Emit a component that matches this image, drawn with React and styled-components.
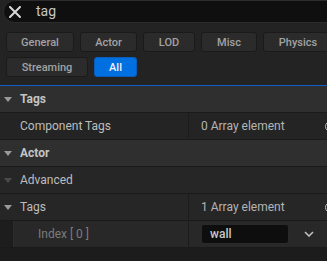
import React from 'react';
import styled, { createGlobalStyle } from 'styled-components';

const Global = createGlobalStyle`
  html, body {
    margin: 0;
    padding: 0;
    background: #1c1c1c;
  }
  body {
    width: 327px;
    height: 261px;
    overflow: hidden;
    font-family: Roboto, "Noto Sans", sans-serif;
  }
`;

const Panel = styled.div`
  width: 327px;
  height: 261px;
  overflow: hidden;
  background: #1c1c1c;
`;

const Top = styled.div`
  background: #232323;
  padding: 0 0 8px 0;
`;

const SearchBox = styled.div`
  width: 340px;
  height: 23px;
  margin-left: 3px;
  border: 1px solid #2c2c2c;
  border-radius: 12px;
  background: #0f0f0f;
  display: flex;
  align-items: center;
  box-sizing: border-box;
  padding-left: 5px;
`;

const SearchText = styled.span`
  color: #c6c6c6;
  font-size: 14px;
  margin-left: 15px;
  margin-top: -1px;
`;

const Filters = styled.div`
  display: flex;
  flex-direction: column;
  gap: 5px;
  padding: 9px 0 0 6px;
`;

const FilterRow = styled.div`
  display: flex;
  gap: 6px;
`;

const FilterButton = styled.div`
  height: 20px;
  flex: none;
  box-sizing: border-box;
  width: ${p => p.w}px;
  display: flex;
  align-items: center;
  justify-content: center;
  font-size: 11px;
  font-weight: 500;
  border-radius: 3px;
  border: 1px solid ${p => (p.active ? '#0a5cb8' : '#1a1a1a')};
  background: ${p => (p.active ? '#0070e0' : '#2b2b2b')};
  color: ${p => (p.active ? '#f0f0f0' : '#a2a2a2')};
`;

const Details = styled.div`
  width: 338px;
  border-top: 1px solid #1060c8;
`;

const Row = styled.div`
  display: flex;
  height: 26px;
  border-bottom: 1px solid #1a1a1a;
  background: ${p => p.bg || '#242424'};
`;

const NameCell = styled.div`
  width: ${p => 188 - (p.indent || 0)}px;
  flex: none;
  display: flex;
  align-items: center;
  box-sizing: border-box;
  padding-left: ${p => p.pad || 20}px;
  font-size: 12px;
  font-weight: ${p => (p.bold ? 700 : 400)};
  color: ${p => p.color || '#bdbdbd'};
`;

const Arrow = styled.span`
  width: 0;
  height: 0;
  border-left: 4px solid transparent;
  border-right: 4px solid transparent;
  border-top: 5px solid ${p => p.color || '#9a9a9a'};
  margin-right: 8px;
  margin-left: -16px;
`;

const ValueCell = styled.div`
  flex: 1;
  display: flex;
  align-items: center;
  border-left: 1px solid #1c1c1c;
  padding: 0 2px 0 12px;
  font-size: 12px;
  color: #b4b4b4;
`;

const Reset = styled.span`
  margin-left: auto;
  width: 9px;
  height: 9px;
  border: 1.5px solid #bdbdbd;
  border-radius: 50%;
`;

const Indent = styled.div`
  width: 13px;
  flex: none;
  background: #1d1d1d;
  border-right: 1px solid #2c2c2c;
`;

const Input = styled.div`
  width: 88px;
  height: 20px;
  box-sizing: border-box;
  background: #0e0e0e;
  border: 1px solid #2a2a2a;
  border-radius: 3px;
  display: flex;
  align-items: center;
  padding-left: 8px;
  font-size: 12px;
  font-weight: 500;
  color: #c8c8c8;
`;

const Chevron = styled.svg`
  margin-left: 15px;
`;

const Bottom = styled.div`
  height: 20px;
  background: #1c1c1c;
`;

function CloseIcon() {
  return (
    <svg width="12" height="12" viewBox="0 0 12 12">
      <path d="M1 1 L11 11 M11 1 L1 11" stroke="#d8d8d8" strokeWidth="2" strokeLinecap="round" />
    </svg>
  );
}

export default function App() {
  return (
    <Panel>
      <Global />
      <Top>
        <SearchBox>
          <CloseIcon />
          <SearchText>tag</SearchText>
        </SearchBox>
        <Filters>
          <FilterRow>
            <FilterButton w={68}>General</FilterButton>
            <FilterButton w={57}>Actor</FilterButton>
            <FilterButton w={52}>LOD</FilterButton>
            <FilterButton w={56}>Misc</FilterButton>
            <FilterButton w={70}>Physics</FilterButton>
          </FilterRow>
          <FilterRow>
            <FilterButton w={82}>Streaming</FilterButton>
            <FilterButton w={43} active>All</FilterButton>
          </FilterRow>
        </Filters>
      </Top>
      <Details>
        <Row bg="#2f2f2f">
          <NameCell bold color="#c4c4c4"><Arrow />Tags</NameCell>
        </Row>
        <Row>
          <NameCell>Component Tags</NameCell>
          <ValueCell>0 Array element<Reset /></ValueCell>
        </Row>
        <Row bg="#2f2f2f">
          <NameCell bold color="#c4c4c4"><Arrow />Actor</NameCell>
        </Row>
        <Row bg="#262626">
          <NameCell><Arrow color="#4a4a4a" />Advanced</NameCell>
        </Row>
        <Row bg="#262626">
          <NameCell><Arrow />Tags</NameCell>
          <ValueCell>1 Array element<Reset /></ValueCell>
        </Row>
        <Row bg="#282828">
          <Indent />
          <NameCell indent={14} pad={24} color="#7c7c7c">Index [ 0 ]</NameCell>
          <ValueCell>
            <Input>wall</Input>
            <Chevron width="10" height="6" viewBox="0 0 10 6">
              <path d="M1 1 L5 5 L9 1" stroke="#c0c0c0" strokeWidth="1.6" fill="none" />
            </Chevron>
          </ValueCell>
        </Row>
      </Details>
      <Bottom />
    </Panel>
  );
}
